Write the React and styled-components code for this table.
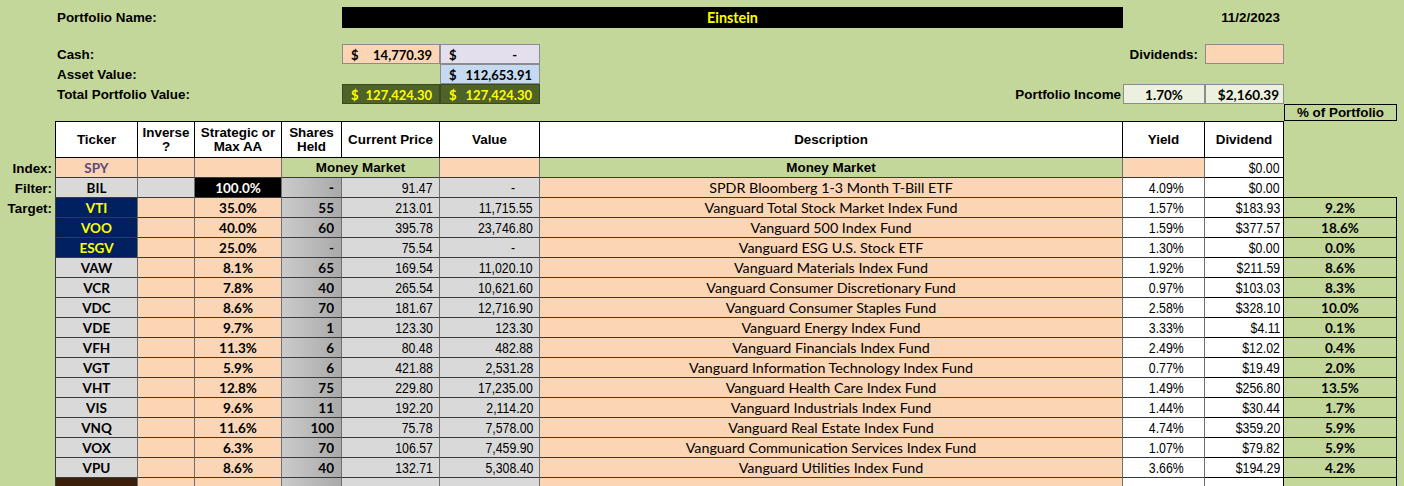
import React from "react";
import styled, { createGlobalStyle } from "styled-components";

const GREEN = "#c4d79b";
const ORANGE = "#fcd5b4";
const GRAY = "#d9d9d9";
const NAVY = "#002060";
const OLIVE = "#4f6228";

const COLS = "55px 83px 57px 87px 60px 98px 100px 583px 82px 79px 113px";

const fonts = {
  arial: `"Liberation Sans", Arial, sans-serif`,
  narrow: `"Liberation Sans", Arial, sans-serif`,
  calibri: `Lato, "Open Sans", sans-serif`,
};

const sizes = { arial: 13.4, narrow: 15, calibri: 14.3 };

const GlobalStyle = createGlobalStyle`
  html, body {
    margin: 0;
    padding: 0;
    background: ${GREEN};
    overflow: hidden;
  }
  body {
    font-family: "Liberation Sans", Arial, sans-serif;
    color: #000;
  }
`;

const Sheet = styled.div`
  width: 1404px;
  height: 486px;
  padding-top: 7px;
  box-sizing: border-box;
`;

const Row = styled.div`
  display: grid;
  grid-template-columns: ${COLS};
  height: ${(p) => p.$h || 20}px;
  margin-top: ${(p) => p.$gap || 0}px;
`;

const Cell = styled.div`
  box-sizing: border-box;
  grid-column: span ${(p) => p.$span || 1};
  display: flex;
  align-items: center;
  justify-content: ${(p) =>
    p.$align === "right" ? "flex-end" : p.$align === "left" ? "flex-start" : "center"};
  text-align: ${(p) => p.$align || "center"};
  padding: 1px ${(p) => (p.$pr != null ? p.$pr : 3)}px 0 ${(p) => (p.$pl != null ? p.$pl : 3)}px;
  background: ${(p) => p.$bg || "transparent"};
  color: ${(p) => p.$color || "#000"};
  font-family: ${(p) => fonts[p.$font || "arial"]};
  font-size: ${(p) => p.$size || sizes[p.$font || "arial"]}px;
  font-weight: ${(p) => (p.$bold ? 700 : 400)};
  line-height: 14px;
  white-space: nowrap;
  overflow: hidden;
  border-right: ${(p) => (p.$grid ? `1px solid ${p.$edge || "#6f6f6f"}` : "none")};
  border-bottom: ${(p) => (p.$grid ? `1px solid ${p.$edge || "#3a3a3a"}` : "none")};
  border-left: ${(p) => (p.$first ? `1px solid ${p.$edge || "#3a3a3a"}` : "none")};
  border-top: ${(p) => (p.$top ? `1px solid ${p.$edge || "#3a3a3a"}` : "none")};
`;

/* Arial Narrow stand-in: Liberation Sans squeezed horizontally */
const Narrow = styled.span`
  display: inline-block;
  transform: scaleX(0.82);
  transform-origin: ${(p) => p.$origin || "right"} center;
`;

const Shares = styled(Cell)`
  background: linear-gradient(to right, #cbcbcb, #a9a9a9);
`;

const Box = styled(Cell)`
  border: 1px solid ${(p) => p.$line || "#8c8c8c"};
  justify-content: ${(p) => p.$justify || "space-between"};
`;

const rows = [
  ["VTI", true, "35.0%", "55", "213.01", "11,715.55", "Vanguard Total Stock Market Index Fund", "1.57%", "$183.93", "9.2%"],
  ["VOO", true, "40.0%", "60", "395.78", "23,746.80", "Vanguard 500 Index Fund", "1.59%", "$377.57", "18.6%"],
  ["ESGV", true, "25.0%", "-", "75.54", "-", "Vanguard ESG U.S. Stock ETF", "1.30%", "$0.00", "0.0%"],
  ["VAW", false, "8.1%", "65", "169.54", "11,020.10", "Vanguard Materials Index Fund", "1.92%", "$211.59", "8.6%"],
  ["VCR", false, "7.8%", "40", "265.54", "10,621.60", "Vanguard Consumer Discretionary Fund", "0.97%", "$103.03", "8.3%"],
  ["VDC", false, "8.6%", "70", "181.67", "12,716.90", "Vanguard Consumer Staples Fund", "2.58%", "$328.10", "10.0%"],
  ["VDE", false, "9.7%", "1", "123.30", "123.30", "Vanguard Energy Index Fund", "3.33%", "$4.11", "0.1%"],
  ["VFH", false, "11.3%", "6", "80.48", "482.88", "Vanguard Financials Index Fund", "2.49%", "$12.02", "0.4%"],
  ["VGT", false, "5.9%", "6", "421.88", "2,531.28", "Vanguard Information Technology Index Fund", "0.77%", "$19.49", "2.0%"],
  ["VHT", false, "12.8%", "75", "229.80", "17,235.00", "Vanguard Health Care Index Fund", "1.49%", "$256.80", "13.5%"],
  ["VIS", false, "9.6%", "11", "192.20", "2,114.20", "Vanguard Industrials Index Fund", "1.44%", "$30.44", "1.7%"],
  ["VNQ", false, "11.6%", "100", "75.78", "7,578.00", "Vanguard Real Estate Index Fund", "4.74%", "$359.20", "5.9%"],
  ["VOX", false, "6.3%", "70", "106.57", "7,459.90", "Vanguard Communication Services Index Fund", "1.07%", "$79.82", "5.9%"],
  ["VPU", false, "8.6%", "40", "132.71", "5,308.40", "Vanguard Utilities Index Fund", "3.66%", "$194.29", "4.2%"],
];

const Money = ({ value, ...rest }) => (
  <Box $font="calibri" $size={13} $bold $pl={8} $pr={value === "-" ? 22 : 7} {...rest}>
    <span>$</span>
    <span>{value}</span>
  </Box>
);

const Price = ({ children, $pr = 6, ...rest }) => (
  <Cell $grid $bg={GRAY} $align="right" $pr={$pr} $font="narrow" {...rest}>
    <Narrow>{children}</Narrow>
  </Cell>
);

const Yield = ({ children }) => (
  <Cell $grid $bg="#fff" $pl={8} $font="narrow">
    <Narrow $origin="center">{children}</Narrow>
  </Cell>
);

const Dividend = ({ children }) => (
  <Cell $grid $bg="#fff" $align="right" $pr={3} $font="narrow" $edge="#000">
    <Narrow>{children}</Narrow>
  </Cell>
);

const DataRow = ({ r, label }) => {
  const [t, navy, s, sh, p, v, d, y, div, pct] = r;
  return (
    <Row>
      <Cell $align="right" $bold>{label}</Cell>
      <Cell $grid $first $bg={navy ? NAVY : GRAY} $color={navy ? "#ffff00" : "#000"} $font="calibri" $size={13.5} $bold>
        {t}
      </Cell>
      <Cell $grid $bg={ORANGE} />
      <Cell $grid $bg={ORANGE} $font="calibri" $size={13.5} $bold>{s}</Cell>
      <Shares $grid $align="right" $pr={7} $font="calibri" $size={13.5} $bold>{sh}</Shares>
      <Price>{p}</Price>
      <Price $pr={v === "-" ? 24 : 6}>{v}</Price>
      <Cell $grid $bg={ORANGE} $font="calibri">{d}</Cell>
      <Yield>{y}</Yield>
      <Dividend>{div}</Dividend>
      <Cell $grid $bg={GREEN} $font="calibri" $size={13.5} $bold $edge="#000">{pct}</Cell>
    </Row>
  );
};

const Header = ({ children, first }) => (
  <Cell $grid $first={first} $top $bg="#fff" $bold $edge="#000">{children}</Cell>
);

export default function App() {
  return (
    <Sheet>
      <GlobalStyle />
      <Row $h={21}>
        <Cell />
        <Cell $span={4} $align="left" $pl={2} $bold>Portfolio Name:</Cell>
        <Cell $span={3} $bg="#000" $color="#ffff00" $font="calibri" $bold>Einstein</Cell>
        <Cell />
        <Cell $align="right" $pr={4} $bold>11/2/2023</Cell>
        <Cell />
      </Row>
      <Row $gap={16}>
        <Cell />
        <Cell $span={4} $align="left" $pl={2} $bold>Cash:</Cell>
        <Money value="14,770.39" $bg={ORANGE} />
        <Money value="-" $bg="#e4dfec" />
        <Cell />
        <Cell $align="right" $pr={7} $bold>Dividends:</Cell>
        <Box $bg={ORANGE} />
        <Cell />
      </Row>
      <Row>
        <Cell />
        <Cell $span={4} $align="left" $pl={2} $bold>Asset Value:</Cell>
        <Cell />
        <Money value="112,653.91" $bg="#c5d9f1" />
        <Cell $span={4} />
      </Row>
      <Row>
        <Cell />
        <Cell $span={4} $align="left" $pl={2} $bold>Total Portfolio Value:</Cell>
        <Money value="127,424.30" $bg={OLIVE} $color="#ffff00" $line="#3b4a1e" />
        <Money value="127,424.30" $bg={OLIVE} $color="#ffff00" $line="#3b4a1e" />
        <Cell $align="right" $pr={2} $bold>Portfolio Income</Cell>
        <Box $bg="#ebf1de" $font="calibri" $size={13.5} $bold $justify="center">1.70%</Box>
        <Box $bg="#ebf1de" $font="calibri" $size={13.5} $bold $pr={4} $justify="flex-end">$2,160.39</Box>
        <Cell />
      </Row>
      <Row $h={17}>
        <Cell $span={10} />
        <Box $bg={GREEN} $line="#000" $bold $justify="center">% of Portfolio</Box>
      </Row>
      <Row $h={37}>
        <Cell />
        <Header first>Ticker</Header>
        <Header>Inverse<br />?</Header>
        <Header>Strategic or<br />Max AA</Header>
        <Header>Shares<br />Held</Header>
        <Header>Current Price</Header>
        <Header>Value</Header>
        <Header>Description</Header>
        <Header>Yield</Header>
        <Header>Dividend</Header>
        <Cell />
      </Row>
      <Row>
        <Cell $align="right" $bold>Index:</Cell>
        <Cell $grid $first $bg={ORANGE} $color="#60497a" $font="calibri" $size={13.5} $bold>SPY</Cell>
        <Cell $grid $bg={ORANGE} />
        <Cell $grid $bg={ORANGE} />
        <Cell $grid $span={2} $bg={GREEN} $bold>Money Market</Cell>
        <Cell $grid $bg={ORANGE} />
        <Cell $grid $bg={GREEN} $bold>Money Market</Cell>
        <Cell $grid $bg={ORANGE} />
        <Dividend>$0.00</Dividend>
        <Cell />
      </Row>
      <Row>
        <Cell $align="right" $bold>Filter:</Cell>
        <Cell $grid $first $bg={GRAY} $font="calibri" $size={13.5} $bold>BIL</Cell>
        <Cell $grid $bg={GRAY} />
        <Cell $grid $bg="#000" $color="#fff" $font="calibri" $size={13.5} $bold>100.0%</Cell>
        <Shares $grid $align="right" $pr={7} $font="calibri" $bold>-</Shares>
        <Price>91.47</Price>
        <Price $pr={24}>-</Price>
        <Cell $grid $bg={ORANGE} $font="calibri">SPDR Bloomberg 1-3 Month T-Bill ETF</Cell>
        <Yield>4.09%</Yield>
        <Dividend>$0.00</Dividend>
        <Cell style={{ borderBottom: "1px solid #000" }} />
      </Row>
      {rows.map((r, i) => (
        <DataRow key={r[0]} r={r} label={i === 0 ? "Target:" : ""} />
      ))}
      <Row>
        <Cell />
        <Cell $grid $first $bg="#3b1f0a" />
        <Cell $grid $bg={ORANGE} />
        <Cell $grid $bg={ORANGE} />
        <Shares $grid />
        <Cell $grid $bg={GRAY} />
        <Cell $grid $bg={GRAY} />
        <Cell $grid $bg={ORANGE} />
        <Cell $grid $bg="#fff" />
        <Cell $grid $bg="#fff" $edge="#000" />
        <Cell $grid $bg={GREEN} $edge="#000" />
      </Row>
    </Sheet>
  );
}
